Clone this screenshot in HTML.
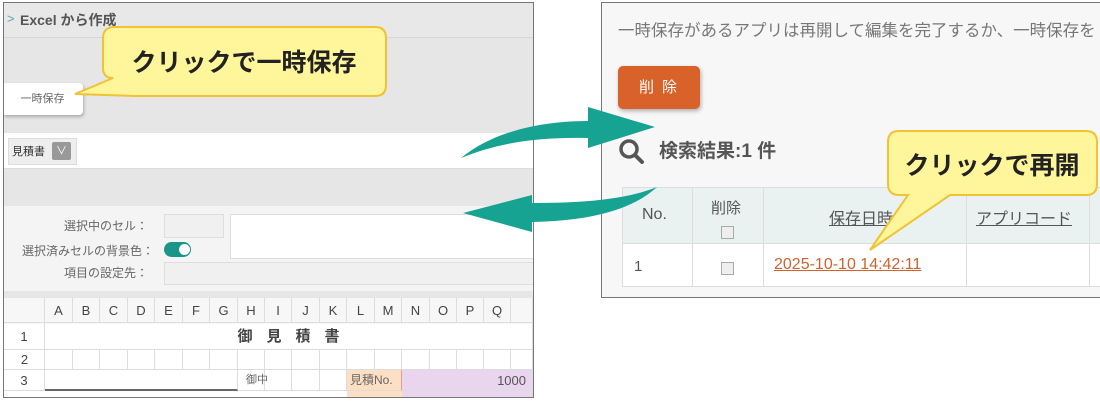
<!DOCTYPE html>
<html><head><meta charset="utf-8"><style>
*{margin:0;padding:0;box-sizing:border-box}
body{width:1100px;height:401px;background:#fff;position:relative;overflow:hidden;font-family:"Liberation Sans","Noto Sans CJK JP",sans-serif;color:#444}
.a{position:absolute}
.cell{position:absolute;border-right:1px solid #ddd;border-bottom:1px solid #ddd;font-size:13px;text-align:center;color:#444;white-space:nowrap;overflow:hidden}
</style></head><body>
<div class="a" style="left:3px;top:2px;width:531px;height:396px;border:1px solid #777;background:#e6e6e6;overflow:hidden">
 <div class="a" style="left:0;top:0;width:531px;height:35px;background:#e8e8e8;border-bottom:1px solid #d6d6d6"></div>
 <div class="a" style="left:3px;top:8px;font-size:13px;color:#5aa">&gt;</div>
 <div class="a" style="left:16px;top:7px;font-size:14px;font-weight:bold;color:#555">Excel から作成</div>
 <div class="a" style="left:-2px;top:80px;width:81px;height:32px;background:#fff;border-radius:4px;box-shadow:1px 2px 3px rgba(0,0,0,.25);font-size:11px;color:#666;text-align:center;line-height:32px">一時保存</div>
 <div class="a" style="left:0;top:130px;width:531px;height:36px;background:#fff;border-bottom:1px solid #ddd"></div>
 <div class="a" style="left:4px;top:135px;width:69px;height:27px;background:#eee;border:1px solid #ddd"></div>
 <div class="a" style="left:8px;top:140px;font-size:11px;color:#333">見積書</div>
 <div class="a" style="left:48px;top:139px;width:19px;height:18px;background:#999;border-radius:2px;color:#fff;font-size:11px;text-align:center;line-height:18px">∨</div>
 <div class="a" style="left:0;top:203px;width:531px;height:85px;background:#f4f4f4"></div>
 <div class="a" style="left:60px;top:214px;font-size:12px;color:#666">選択中のセル：</div>
 <div class="a" style="left:160px;top:211px;width:60px;height:24px;border:1px solid #ddd;background:#f0f0f0"></div>
 <div class="a" style="left:226px;top:211px;width:305px;height:45px;border:1px solid #ddd;background:#fff"></div>
 <div class="a" style="left:18px;top:239px;font-size:12px;color:#666">選択済みセルの背景色：</div>
 <div class="a" style="left:160px;top:239px;width:27px;height:15px;border-radius:8px;background:#1a9688"></div>
 <div class="a" style="left:175px;top:241px;width:11px;height:11px;border-radius:50%;background:#fff"></div>
 <div class="a" style="left:60px;top:261px;font-size:12px;color:#666">項目の設定先：</div>
 <div class="a" style="left:160px;top:259px;width:371px;height:23px;border:1px solid #ddd;background:#f0f0f0"></div>
 <div class="a" style="left:0;top:295px;width:531px;height:105px;background:#fff"></div>
 <div class="a" style="left:0;top:295px;width:531px;height:26px;background:#f7f7f7"></div>
</div>
<div id="grid"></div>
<svg class="a" style="left:0;top:0" width="1100" height="401">
 <path d="M115,27 H375 Q386,27 386,38 V85 Q386,96 375,96 H135 L75,94 L113,78 Q103,78 103,68 V38 Q103,27 115,27Z" fill="#fff59a" stroke="#f2c235" stroke-width="2"/>
 <text x="244" y="71" font-size="25" font-weight="bold" text-anchor="middle" fill="#222" font-family="Liberation Sans,Noto Sans CJK JP,sans-serif">クリックで一時保存</text>
</svg>
<div class="a" style="left:601px;top:2px;width:500px;height:296px;border:1px solid #777;background:#f7f7f7;overflow:hidden">
 <div class="a" style="left:16px;top:14px;font-size:16.5px;color:#777;white-space:nowrap">一時保存があるアプリは再開して編集を完了するか、一時保存を</div>
 <div class="a" style="left:16px;top:63px;width:82px;height:43px;background:#d9612a;border-radius:5px;box-shadow:1px 2px 4px rgba(0,0,0,.3);color:#fff;font-size:15px;text-align:center;line-height:43px;letter-spacing:8px;padding-left:6px">削除</div>
 <svg class="a" style="left:16px;top:135px" width="30" height="30"><circle cx="11" cy="11" r="8" fill="none" stroke="#555" stroke-width="3.5"/><path d="M17,17 L24,24" stroke="#555" stroke-width="4" stroke-linecap="round"/></svg>
 <div class="a" style="left:57px;top:133px;font-size:19px;font-weight:bold;color:#555">検索結果:1 件</div>
 <div class="a" style="left:20px;top:184px;width:480px;height:100px;background:#fff;border:1px solid #ddd"></div>
 <div class="a" style="left:20px;top:184px;width:480px;height:57px;background:#e9f1f1;border:1px solid #ddd"></div>
 <div class="a" style="left:90px;top:184px;width:1px;height:100px;background:#ddd"></div>
 <div class="a" style="left:161px;top:184px;width:1px;height:100px;background:#ddd"></div>
 <div class="a" style="left:364px;top:184px;width:1px;height:100px;background:#ddd"></div>
 <div class="a" style="left:487px;top:184px;width:1px;height:100px;background:#ddd"></div>
 <div class="a" style="left:40px;top:203px;font-size:16px;color:#555">No.</div>
 <div class="a" style="left:109px;top:194px;font-size:15px;color:#555">削除</div>
 <div class="a" style="left:119px;top:223px;width:13px;height:13px;border:1px solid #aaa;background:#eee"></div>
 <div class="a" style="left:227px;top:202px;font-size:16px;color:#555;text-decoration:underline">保存日時</div>
 <div class="a" style="left:374px;top:202px;font-size:16px;color:#555;text-decoration:underline">アプリコード</div>
 <div class="a" style="left:32px;top:255px;font-size:15px;color:#555">1</div>
 <div class="a" style="left:119px;top:259px;width:13px;height:13px;border:1px solid #aaa;background:#eee"></div>
 <div class="a" style="left:172px;top:253px;font-size:16px;color:#d0622f;text-decoration:underline">2025-10-10 14:42:11</div>
</div>
<svg class="a" style="left:0;top:0" width="1100" height="401">
 <path d="M899,131 H1086 Q1097,131 1097,142 V184 Q1097,195 1086,195 H950 L870,250 L908,195 H899 Q888,195 888,184 V142 Q888,131 899,131Z" fill="#fff59a" stroke="#f2c235" stroke-width="2"/>
 <text x="992" y="174" font-size="25" font-weight="bold" text-anchor="middle" fill="#222" font-family="Liberation Sans,Noto Sans CJK JP,sans-serif">クリックで再開</text>
 <path d="M461,158 C495,130 545,121 588,121 L588,107 L655,127 L588,148 L588,138 C540,137 500,142 461,158Z" fill="#17a392"/>
 <path d="M657,187 C625,200 580,203 532,203 L532,195 L463,213 L532,232 L532,222 C590,221 632,210 657,187Z" fill="#17a392"/>
</svg>
<script>
(function(){
var g=document.getElementById('grid'),h='';
var xs=[4,45,73,100,128,155,183,210,238,265,292,320,347,375,402,430,457,484,511,533];
var L='ABCDEFGHIJKLMNOPQ';
for(var i=0;i<xs.length-1;i++){
 var w=xs[i+1]-xs[i];
 h+='<div class="cell" style="left:'+xs[i]+'px;top:298px;width:'+w+'px;height:25px;line-height:25px;background:#f7f7f7">'+(i>0&&i<=17?L[i-1]:'')+'</div>';
 h+='<div class="cell" style="left:'+xs[i]+'px;top:350px;width:'+w+'px;height:20px"></div>';
}
h+='<div class="cell" style="left:4px;top:323px;width:41px;height:27px;line-height:27px">1</div>';
h+='<div class="cell" style="left:45px;top:323px;width:488px;height:27px;line-height:27px;font-size:15px;font-weight:bold;letter-spacing:14px;padding-left:14px">御見積書</div>';
h+='<div class="a" style="left:4px;top:352px;width:41px;text-align:center;font-size:13px">2</div>';
h+='<div class="cell" style="left:4px;top:370px;width:41px;height:21px;line-height:21px">3</div>';
h+='<div class="cell" style="left:45px;top:370px;width:193px;height:21px;border-bottom:2px solid #666"></div>';
var r=[[238,265,'御中'],[265,292,''],[292,320,''],[320,347,'']];
r.forEach(function(c){h+='<div class="cell" style="left:'+c[0]+'px;top:370px;width:'+(c[1]-c[0])+'px;height:21px;line-height:21px;text-align:left;padding-left:8px;font-size:11px;color:#666;overflow:visible">'+c[2]+'</div>';});
h+='<div class="cell" style="left:347px;top:370px;width:55px;height:21px;line-height:21px;background:#fde0c4;border-right:1px solid #e99;font-size:12px;text-align:left;padding-left:3px;color:#666">見積No.</div>';
h+='<div class="cell" style="left:402px;top:370px;width:131px;height:21px;line-height:21px;background:#ead5ef;text-align:right;padding-right:6px;color:#555">1000</div>';
h+='<div class="a" style="left:347px;top:391px;width:55px;height:6px;background:#fde0c4"></div>';
h+='<div class="a" style="left:402px;top:391px;width:131px;height:6px;background:#ead5ef"></div>';
g.innerHTML=h;
})();
</script>
</body></html>
